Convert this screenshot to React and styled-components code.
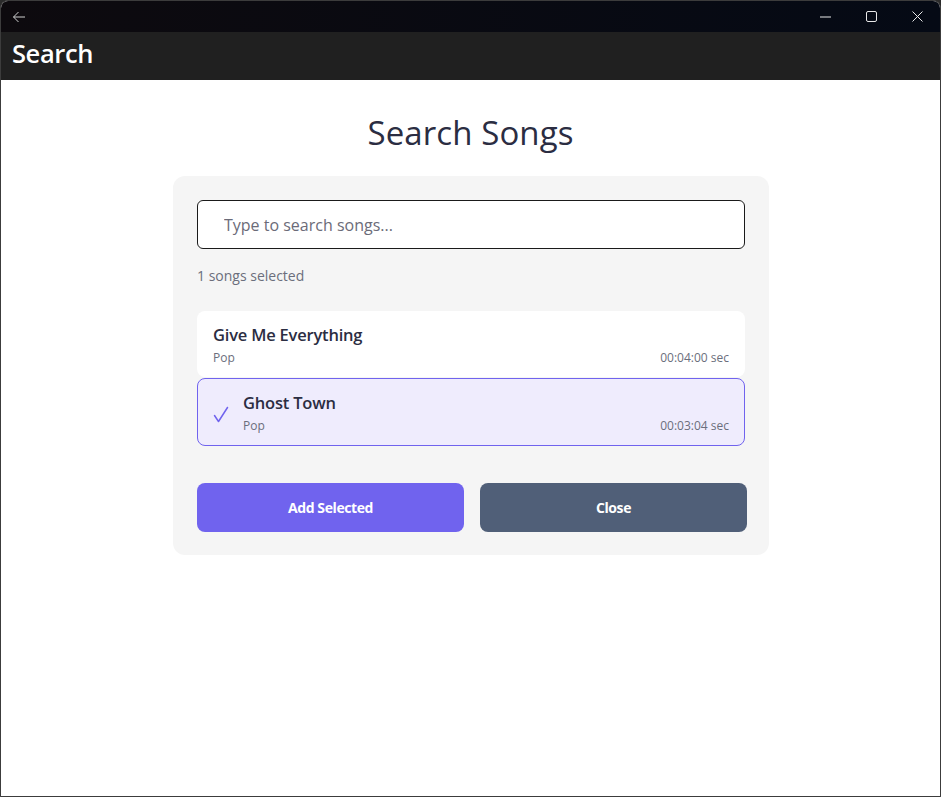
import React from "react";
import styled, { createGlobalStyle } from "styled-components";

const Global = createGlobalStyle`
  html, body { margin: 0; padding: 0; background: #2b2b2b; }
  body { font-family: "Open Sans", "Noto Sans", sans-serif; }
  * { box-sizing: border-box; }
`;

const Window = styled.div`
  width: 941px;
  height: 797px;
  border: 1px solid #3c3c3c;
  border-radius: 8px 8px 0 0;
  overflow: hidden;
  display: flex;
  flex-direction: column;
  background: #fff;
`;

const TitleBar = styled.div`
  height: 31px;
  flex: none;
  display: flex;
  align-items: center;
  background: linear-gradient(90deg, #0d0a0e, #050a15);
  color: #d8d8d8;
`;

const BackBtn = styled.div`
  width: 36px;
  display: flex;
  justify-content: center;
`;

const Spacer = styled.div`
  flex: 1;
`;

const Ctrl = styled.div`
  width: 46px;
  height: 31px;
  display: flex;
  align-items: center;
  justify-content: center;
`;

const Header = styled.div`
  height: 48px;
  flex: none;
  background: #202020;
  color: #fff;
  display: flex;
  align-items: center;
  padding: 0 0 6px 11px;
  font-family: "Open Sans", sans-serif;
  font-weight: 600;
  font-size: 25.5px;
  letter-spacing: -0.4px;
`;

const Main = styled.main`
  flex: 1;
  display: flex;
  flex-direction: column;
  align-items: center;
  padding-top: 34px;
`;

const Title = styled.h1`
  margin: 0 0 24px;
  font-size: 33px;
  line-height: 38px;
  font-weight: 500;
  color: #2b2d42;
  letter-spacing: 0.1px;
`;

const Card = styled.section`
  width: 596px;
  background: #f5f5f5;
  border-radius: 12px;
  padding: 24px 24px 23px;
  margin-left: 1px;
`;

const Input = styled.input`
  display: block;
  width: 548px;
  height: 49px;
  border: 1px solid #1a1a1a;
  border-radius: 6px;
  padding: 0 26px;
  font-family: "Open Sans", sans-serif;
  font-size: 16px;
  background: #fff;
  color: #333;
  outline: none;
  &::placeholder { color: #6b6b78; }
`;

const Count = styled.div`
  margin-top: 17px;
  font-size: 14px;
  line-height: 20px;
  color: #6b6e7c;
`;

const List = styled.div`
  margin-top: 25px;
  display: flex;
  flex-direction: column;
  gap: 1px;
  width: 548px;
`;

const Item = styled.div`
  display: flex;
  align-items: center;
  gap: 14px;
  height: ${(p) => (p.$selected ? 68 : 66)}px;
  padding: 0 15px;
  background: ${(p) => (p.$selected ? "#efecfd" : "#fff")};
  border: 1px solid ${(p) => (p.$selected ? "#7063ee" : "transparent")};
  border-radius: 8px;
`;

const Check = styled.svg`
  flex: none;
  width: 16px;
  height: 17px;
  margin-top: 4px;
`;

const Body = styled.div`
  flex: 1;
  display: flex;
  flex-direction: column;
`;

const SongTitle = styled.div`
  font-size: 16.5px;
  font-weight: 600;
  line-height: 23px;
  color: #2b2d42;
  letter-spacing: -0.2px;
`;

const Meta = styled.div`
  display: flex;
  justify-content: space-between;
  font-size: 12px;
  line-height: 16px;
  color: #6b6e7c;
  margin-top: 4px;
`;

const Buttons = styled.div`
  margin-top: 37px;
  display: grid;
  grid-template-columns: 1fr 1fr;
  gap: 16px;
  width: 550px;
`;

const Button = styled.button`
  height: 49px;
  border: none;
  border-radius: 8px;
  background: ${(p) => (p.$primary ? "#7063ee" : "#505f78")};
  color: #fff;
  font-family: "Open Sans", sans-serif;
  font-weight: 700;
  font-size: 14px;
  letter-spacing: -0.4px;
  cursor: pointer;
`;

const songs = [
  { title: "Give Me Everything", genre: "Pop", duration: "00:04:00 sec", selected: false },
  { title: "Ghost Town", genre: "Pop", duration: "00:03:04 sec", selected: true },
];

export default function App() {
  return (
    <>
      <Global />
      <Window>
        <TitleBar>
          <BackBtn>
            <svg width="14" height="12" viewBox="0 0 14 12" fill="none" stroke="#cfcfcf" strokeWidth="1">
              <path d="M13 6H1.5M6.5 1L1.5 6l5 5" />
            </svg>
          </BackBtn>
          <Spacer />
          <Ctrl>
            <svg width="11" height="2" viewBox="0 0 11 2"><path d="M0 1h11" stroke="#e8e8e8" strokeWidth="1" /></svg>
          </Ctrl>
          <Ctrl>
            <svg width="11" height="11" viewBox="0 0 11 11" fill="none"><rect x="0.5" y="0.5" width="10" height="10" rx="1.5" stroke="#e8e8e8" /></svg>
          </Ctrl>
          <Ctrl>
            <svg width="11" height="11" viewBox="0 0 11 11" fill="none" stroke="#e8e8e8"><path d="M0.5 0.5l10 10M10.5 0.5l-10 10" /></svg>
          </Ctrl>
        </TitleBar>
        <Header>Search</Header>
        <Main>
          <Title>Search Songs</Title>
          <Card>
            <Input placeholder="Type to search songs..." />
            <Count>1 songs selected</Count>
            <List>
              {songs.map((s) => (
                <Item key={s.title} $selected={s.selected}>
                  {s.selected && (
                    <Check viewBox="0 0 16 17" fill="none" stroke="#7063ee" strokeWidth="1.5" strokeLinecap="round" strokeLinejoin="round">
                      <path d="M1.5 9.5L5.5 15.5L14.5 1.5" />
                    </Check>
                  )}
                  <Body>
                    <SongTitle>{s.title}</SongTitle>
                    <Meta>
                      <span>{s.genre}</span>
                      <span>{s.duration}</span>
                    </Meta>
                  </Body>
                </Item>
              ))}
            </List>
            <Buttons>
              <Button $primary>Add Selected</Button>
              <Button>Close</Button>
            </Buttons>
          </Card>
        </Main>
      </Window>
    </>
  );
}
